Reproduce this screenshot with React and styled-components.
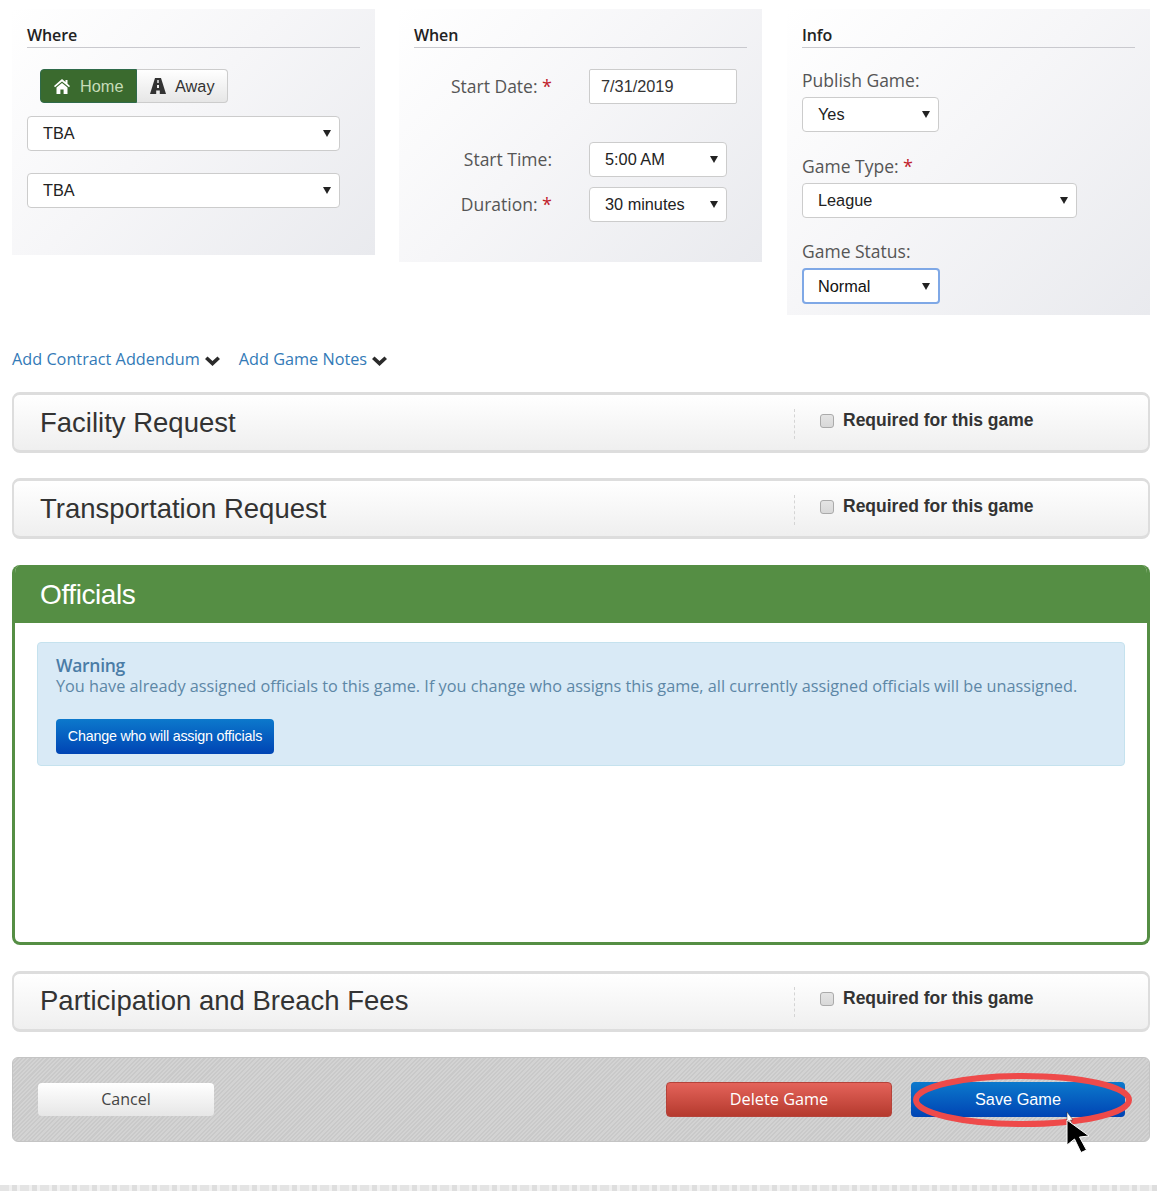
import React from 'react';
import styled, { createGlobalStyle } from 'styled-components';

const Global = createGlobalStyle`
  html, body { margin: 0; padding: 0; background: #fff; }
  * { box-sizing: border-box; }
  body { font-family: "Open Sans", "Liberation Sans", sans-serif; color: #333; }
`;

const Page = styled.div`
  height: 1191px;
  overflow: hidden;
  padding-top: 9px;
  display: flex;
  flex-direction: column;
`;
const Content = styled.div`
  margin-left: 12px;
  width: 1138px;
  display: flex;
  flex-direction: column;
`;
const Panels = styled.div`
  display: flex;
  gap: 24px;
  align-items: flex-start;
`;
const Panel = styled.section`
  width: 363px;
  margin-left: ${p => p.$ml || 0}px;
  padding: 16px 15px ${p => p.$bottom}px;
  background: linear-gradient(135deg, #ffffff 0%, #f6f6f8 45%, #e9eaee 100%);
`;
const PanelTitle = styled.h3`
  margin: 0 0 21px;
  height: 23px;
  border-bottom: 1px solid #c9c9ce;
  font: 600 16px/20px "Open Sans", sans-serif;
  letter-spacing: -0.1px;
  color: #222;
`;
const ToggleGroup = styled.div`
  display: inline-flex;
  margin-left: 13px;
  height: 34px;
  vertical-align: top;
`;
const Toggle = styled.div`
  display: flex;
  align-items: center;
  gap: ${p => (p.$active ? 10 : 9)}px;
  width: ${p => p.$w}px;
  padding-left: 13px;
  font: 16.3px "Liberation Sans", sans-serif;
  border-radius: ${p => (p.$active ? '4px 0 0 4px' : '0 4px 4px 0')};
  color: ${p => (p.$active ? '#c6dcb8' : '#333')};
  background: ${p => (p.$active ? '#3a6a2e' : 'linear-gradient(#fff, #e6e6e6)')};
  border: 1px solid ${p => (p.$active ? '#2f6a4a' : '#ccc')};
  border-left-width: ${p => (p.$active ? 1 : 0)}px;
  svg { color: ${p => (p.$active ? '#fff' : '#333')}; }
`;
const Select = styled.div`
  display: flex;
  align-items: center;
  justify-content: space-between;
  width: ${p => p.$w}px;
  height: 35px;
  margin-top: ${p => p.$mt || 0}px;
  padding: 0 8px 0 15px;
  background: #fff;
  border: 1px solid #ccc;
  border-radius: 4px;
  font: 16.3px "Liberation Sans", sans-serif;
  color: #222;
  &::after {
    content: "";
    border-left: 4px solid transparent;
    border-right: 4px solid transparent;
    border-top: 7px solid #222;
  }
`;
const FocusSelect = styled(Select)`
  height: 36px;
  border: 2px solid #7fa8e6;
  padding: 1px 8px 0 14px;
  color: #111;
`;
const DateInput = styled.div`
  display: flex;
  align-items: center;
  width: 148px;
  height: 35px;
  padding-left: 11px;
  background: #fff;
  border: 1px solid #ccc;
  border-radius: 2px;
  font: 16.3px "Liberation Sans", sans-serif;
  color: #333;
`;
const FormRow = styled.div`
  display: flex;
  align-items: center;
  gap: 37px;
  margin-top: ${p => p.$mt || 0}px;
`;
const RowLabel = styled.div`
  width: 138px;
  padding-bottom: 2px;
  text-align: right;
  font: 17.5px "Open Sans", sans-serif;
  color: #555;
`;
const Req = styled.span`
  color: #c0202a;
  font-size: 18px;
`;
const FieldLabel = styled.div`
  height: 22px;
  margin-top: ${p => p.$mt || 0}px;
  margin-bottom: ${p => p.$mb || 6}px;
  font: 17.5px/22px "Open Sans", sans-serif;
  color: #555;
`;
const Links = styled.div`
  display: flex;
  gap: 19px;
  margin: 33px 0 22px;
  height: 22px;
  align-items: center;
`;
const LinkItem = styled.a`
  display: flex;
  align-items: center;
  gap: 5px;
  font: 16.25px/22px "Open Sans", sans-serif;
  color: #337ab7;
  svg { margin-top: 3px; }
`;
const Card = styled.div`
  display: flex;
  align-items: center;
  height: 61px;
  margin-bottom: ${p => p.$mb}px;
  padding-left: 26px;
  padding-bottom: ${p => p.$pb || 0}px;
  border: 2px solid #ddd;
  border-top-width: 3px;
  border-bottom-width: 3px;
  border-radius: 8px;
  background: linear-gradient(#ffffff, #efefef);
`;
const CardTitle = styled.h2`
  flex: 1;
  margin: 0;
  font: 400 27.5px "Liberation Sans", sans-serif;
  color: #333;
`;
const Required = styled.label`
  display: flex;
  align-items: center;
  width: 354px;
  height: 30px;
  margin-top: 2px;
  padding: 0 0 6px 25px;
  gap: 9px;
  border-left: 1px dashed #d4d4d4;
  font: 700 17.5px "Liberation Sans", sans-serif;
  color: #333;
`;
const Check = styled.span`
  width: 14px;
  height: 14px;
  border: 1px solid #aaa;
  border-radius: 3px;
  background: linear-gradient(#e4e4e4, #d8d8d8);
`;
const Officials = styled.div`
  height: 380px;
  margin-bottom: 26px;
  border: 3px solid #558e44;
  border-top: 0;
  border-radius: 8px;
  overflow: hidden;
`;
const OfficialsHead = styled.div`
  height: 58px;
  margin: 0 -3px;
  padding: 2px 0 0 28px;
  display: flex;
  align-items: center;
  background: #558e44;
  font: 28px "Liberation Sans", sans-serif;
  letter-spacing: -0.4px;
  color: #fff;
`;
const Alert = styled.div`
  margin: 19px 22px 0;
  height: 124px;
  padding: 12px 18px 0;
  background: #d9eaf6;
  border: 1px solid #c5e2ee;
  border-radius: 4px;
  color: #5d87a6;
`;
const AlertTitle = styled.div`
  font: 600 17.5px/21px "Open Sans", sans-serif;
  letter-spacing: -0.3px;
  color: #4a7ca6;
`;
const AlertText = styled.div`
  font: 16.25px/21px "Open Sans", sans-serif;
`;
const BlueButton = styled.div`
  display: flex;
  align-items: center;
  justify-content: center;
  width: ${p => p.$w}px;
  height: 35px;
  margin-top: ${p => p.$mt || 0}px;
  padding-bottom: ${p => p.$pb || 0}px;
  border-radius: 4px;
  background: linear-gradient(#0c79cc, #0044b4);
  color: #fff;
  font: ${p => p.$size}px "Liberation Sans", sans-serif;
  letter-spacing: ${p => p.$ls || 0}px;
`;
const Footer = styled.div`
  display: flex;
  align-items: center;
  height: 85px;
  padding: 0 24px 0 25px;
  border-radius: 6px;
  border: 1px solid #c4c4c4;
  background: repeating-linear-gradient(135deg, #c9c9c9 0, #c9c9c9 1.5px, #d3d3d3 1.5px, #d3d3d3 3px);
`;
const CancelButton = styled.div`
  width: 176px;
  height: 33px;
  padding-bottom: 2px;
  display: flex;
  align-items: center;
  justify-content: center;
  margin-right: auto;
  border-radius: 4px;
  background: linear-gradient(#ffffff, #e6e6e6);
  font: 16px "Open Sans", sans-serif;
  color: #444;
`;
const DeleteButton = styled.div`
  width: 226px;
  height: 35px;
  padding-bottom: 2px;
  display: flex;
  align-items: center;
  justify-content: center;
  margin-right: 19px;
  border-radius: 4px;
  border: 1px solid #b5433a;
  background: linear-gradient(#e4635a, #b53a2e);
  font: 16.3px "Open Sans", sans-serif;
  color: #fff;
`;
const SaveWrap = styled.div`
  position: relative;
`;
const Ring = styled.svg`
  position: absolute;
  left: 2px;
  top: -9px;
`;
const Arrow = styled.svg`
  position: absolute;
  left: 153px;
  top: 28px;
`;
const Strip = styled.div`
  height: 6px;
  margin-top: 43px;
  background: repeating-linear-gradient(90deg, #e4e4e4 0, #e4e4e4 9px, #f0f0f0 9px, #f0f0f0 12px, #dedede 12px, #dedede 17px, #f2f2f2 17px, #f2f2f2 20px);
`;

const Require = () => <Req>*</Req>;

const HomeIcon = () => (
  <svg width="16" height="15" viewBox="0 0 16 15" fill="currentColor">
    <path d="M8 0 L11.5 3 V1 H13.5 V4.8 L16 7 L15 8.2 L8 2.4 L1 8.2 L0 7 Z" />
    <path d="M8 4 L13.5 8.6 V15 H9.6 V10.5 H6.4 V15 H2.5 V8.6 Z" />
  </svg>
);
const RoadIcon = () => (
  <svg width="16" height="16" viewBox="0 0 16 16" fill="currentColor">
    <path fillRule="evenodd" d="M5 0 H11 L16 16 H9.8 V12.4 H6.2 V16 H0 Z M7.3 2 V5 H8.7 V2 Z M7 7 V10 H9 V7 Z" />
  </svg>
);
const Chevron = () => (
  <svg width="15" height="10" viewBox="0 0 15 10" fill="#2b2b2b">
    <path d="M0 3 L2.5 0.5 L7.5 5 L12.5 0.5 L15 3 L7.5 10 Z" />
  </svg>
);

function RequestCard({ title, mb, pb }) {
  return (
    <Card $mb={mb} $pb={pb}>
      <CardTitle>{title}</CardTitle>
      <Required><Check />Required for this game</Required>
    </Card>
  );
}

export default function App() {
  return (
    <Page>
      <Global />
      <Content>
        <Panels>
          <Panel $bottom={47}>
            <PanelTitle>Where</PanelTitle>
            <ToggleGroup>
              <Toggle $active $w={97}><HomeIcon />Home</Toggle>
              <Toggle $w={91}><RoadIcon />Away</Toggle>
            </ToggleGroup>
            <Select $w={313} $mt={13}>TBA</Select>
            <Select $w={313} $mt={22}>TBA</Select>
          </Panel>
          <Panel $bottom={40}>
            <PanelTitle>When</PanelTitle>
            <FormRow><RowLabel>Start Date: <Require /></RowLabel><DateInput>7/31/2019</DateInput></FormRow>
            <FormRow $mt={38}><RowLabel>Start Time:</RowLabel><Select $w={138}>5:00 AM</Select></FormRow>
            <FormRow $mt={10}><RowLabel>Duration: <Require /></RowLabel><Select $w={138}>30 minutes</Select></FormRow>
          </Panel>
          <Panel $bottom={11} $ml={1}>
            <PanelTitle>Info</PanelTitle>
            <FieldLabel>Publish Game:</FieldLabel>
            <Select $w={137}>Yes</Select>
            <FieldLabel $mt={23}>Game Type: <Require /></FieldLabel>
            <Select $w={275}>League</Select>
            <FieldLabel $mt={22}>Game Status:</FieldLabel>
            <FocusSelect $w={138}>Normal</FocusSelect>
          </Panel>
        </Panels>
        <Links>
          <LinkItem>Add Contract Addendum <Chevron /></LinkItem>
          <LinkItem>Add Game Notes <Chevron /></LinkItem>
        </Links>
        <RequestCard title="Facility Request" mb={25} />
        <RequestCard title="Transportation Request" mb={26} />
        <Officials>
          <OfficialsHead>Officials</OfficialsHead>
          <Alert>
            <AlertTitle>Warning</AlertTitle>
            <AlertText>You have already assigned officials to this game. If you change who assigns this game, all currently assigned officials will be unassigned.</AlertText>
            <BlueButton $w={218} $mt={22} $size={14.3} $ls={-0.2} $pb={2}>Change who will assign officials</BlueButton>
          </Alert>
        </Officials>
        <RequestCard title="Participation and Breach Fees" mb={25} pb={2} />
        <Footer>
          <CancelButton>Cancel</CancelButton>
          <DeleteButton>Delete Game</DeleteButton>
          <SaveWrap>
            <BlueButton $w={214} $size={16.3}>Save Game</BlueButton>
            <Ring width="219" height="54" viewBox="0 0 219 54">
              <ellipse cx="109.5" cy="27" rx="106.5" ry="24" fill="none" stroke="#ee4a4a" strokeWidth="6" />
            </Ring>
            <Arrow width="28" height="44" viewBox="0 0 28 44">
              <path d="M3 2 L3 12 L5 10.5 L7 14 L8 13.5 L6.5 10 L9 10 Z" fill="#fff" stroke="#333" strokeWidth="0.5" />
              <path d="M3 10 L25 26 L15.5 27 L22.5 40 L17 42.5 L10.5 29 L3 35 Z" fill="#000" stroke="#fff" strokeWidth="1" />
            </Arrow>
          </SaveWrap>
        </Footer>
      </Content>
      <Strip />
    </Page>
  );
}
